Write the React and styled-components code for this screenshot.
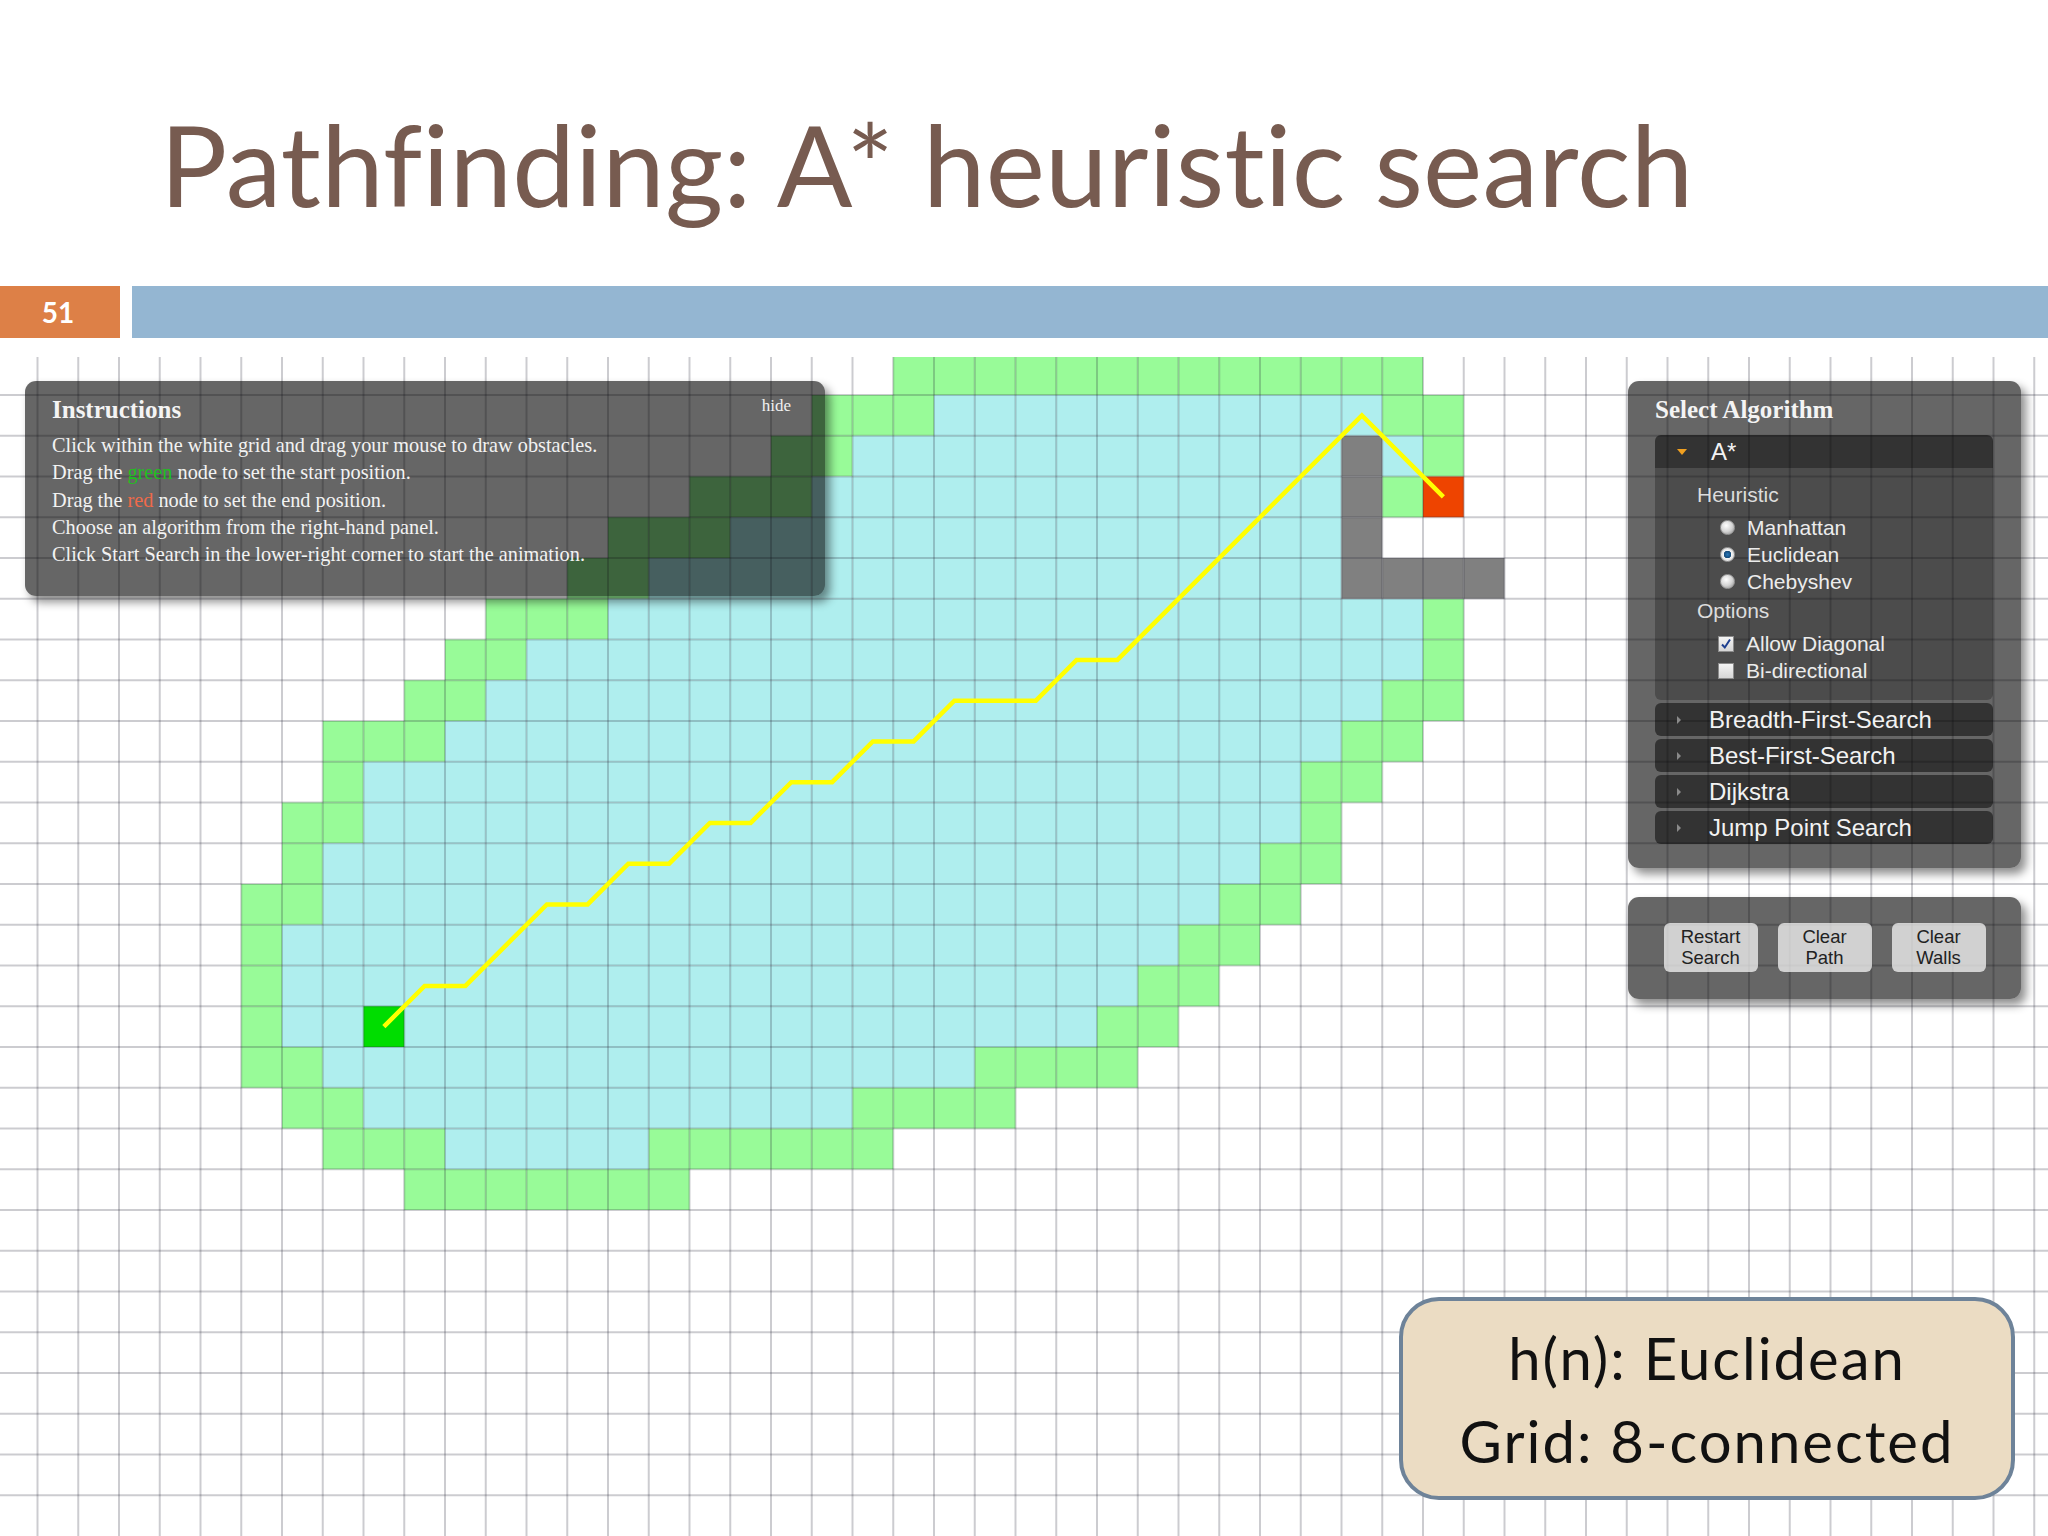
import React from "react";
import styled, { createGlobalStyle } from "styled-components";

const GlobalStyle = createGlobalStyle`
  html, body {
    margin: 0;
    padding: 0;
    background: #ffffff;
  }
  #root {
    width: 2048px;
    height: 1536px;
    overflow: hidden;
  }
`;

const CELL = 40.75;
const OX = 37.5;
const OY = 38;
const COLS = 50;
const ROWS = 28;

// open = light green, closed = pale turquoise
const spans = {
  "-1": [[21, 33, "o"]],
  0: [[19, 21, "o"], [22, 32, "c"], [33, 34, "o"]],
  1: [[18, 19, "o"], [20, 31, "c"], [33, 33, "c"], [34, 34, "o"]],
  2: [[16, 18, "o"], [19, 31, "c"], [33, 33, "o"]],
  3: [[14, 16, "o"], [17, 31, "c"]],
  4: [[13, 14, "o"], [15, 31, "c"]],
  5: [[11, 13, "o"], [14, 33, "c"], [34, 34, "o"]],
  6: [[10, 11, "o"], [12, 33, "c"], [34, 34, "o"]],
  7: [[9, 10, "o"], [11, 32, "c"], [33, 34, "o"]],
  8: [[7, 9, "o"], [10, 31, "c"], [32, 33, "o"]],
  9: [[7, 7, "o"], [8, 30, "c"], [31, 32, "o"]],
  10: [[6, 7, "o"], [8, 30, "c"], [31, 31, "o"]],
  11: [[6, 6, "o"], [7, 29, "c"], [30, 31, "o"]],
  12: [[5, 6, "o"], [7, 28, "c"], [29, 30, "o"]],
  13: [[5, 5, "o"], [6, 27, "c"], [28, 29, "o"]],
  14: [[5, 5, "o"], [6, 26, "c"], [27, 28, "o"]],
  15: [[5, 5, "o"], [6, 25, "c"], [26, 27, "o"]],
  16: [[5, 6, "o"], [7, 22, "c"], [23, 26, "o"]],
  17: [[6, 7, "o"], [8, 19, "c"], [20, 23, "o"]],
  18: [[7, 9, "o"], [10, 14, "c"], [15, 20, "o"]],
  19: [[9, 15, "o"]],
};

const walls = [
  [32, 1], [32, 2], [32, 3], [32, 4], [33, 4], [34, 4], [35, 4],
];

const start = [8, 15];
const end = [34, 2];

const path = [
  [8, 15], [9, 14], [10, 14], [12, 12], [13, 12], [14, 11], [15, 11],
  [16, 10], [17, 10], [18, 9], [19, 9], [20, 8], [21, 8], [22, 7],
  [24, 7], [25, 6], [26, 6], [32, 0], [34, 2],
];

const fills = { o: "#98fb98", c: "#afeeee" };

const BoardSvg = styled.svg`
  display: block;
  position: absolute;
  inset: 0;
`;

function GridBoard() {
  const cells = [];
  Object.entries(spans).forEach(([row, list]) => {
    const j = Number(row);
    list.forEach(([a, b, t]) => {
      for (let k = a; k <= b; k++) {
        cells.push(
          <rect
            key={`${k}-${j}`}
            x={OX + CELL * k}
            y={OY + CELL * j}
            width={CELL}
            height={CELL}
            fill={fills[t]}
          />
        );
      }
    });
  });
  walls.forEach(([k, j]) =>
    cells.push(
      <rect key={`w${k}-${j}`} x={OX + CELL * k} y={OY + CELL * j} width={CELL} height={CELL} fill="#808080" />
    )
  );
  const lines = [];
  for (let k = 0; k < COLS; k++) {
    const x = OX + CELL * k;
    lines.push(<line key={`v${k}`} x1={x} y1={0} x2={x} y2={1179} />);
  }
  for (let j = 0; j < ROWS; j++) {
    const y = OY + CELL * j;
    lines.push(<line key={`h${j}`} x1={0} y1={y} x2={2048} y2={y} />);
  }
  const pts = path
    .map(([k, j]) => `${OX + CELL * (k + 0.5)},${OY + CELL * (j + 0.5)}`)
    .join(" ");
  return (
    <BoardSvg width="2048" height="1179" viewBox="0 0 2048 1179">
      {cells}
      <rect x={OX + CELL * start[0]} y={OY + CELL * start[1]} width={CELL} height={CELL} fill="#00dd00" />
      <rect x={OX + CELL * end[0]} y={OY + CELL * end[1]} width={CELL} height={CELL} fill="#ee4400" />
      <g stroke="rgba(40,40,60,0.24)" strokeWidth="2">{lines}</g>
      <polyline points={pts} fill="none" stroke="#ffff00" strokeWidth="4.5" strokeLinejoin="miter" />
    </BoardSvg>
  );
}

const Slide = styled.div`
  width: 2048px;
  height: 1536px;
  display: flex;
  flex-direction: column;
  background: #ffffff;
`;

const TitleArea = styled.header`
  height: 286px;
  padding: 108px 0 0 160px;
  box-sizing: border-box;
`;

const Title = styled.h1`
  margin: 0;
  font-family: "Lato", "Liberation Sans", sans-serif;
  font-weight: 400;
  font-size: 112px;
  line-height: 1;
  color: #775b50;
  white-space: nowrap;
  font-variant-ligatures: none;
  letter-spacing: 0.2px;
`;

const Bar = styled.div`
  height: 52px;
  display: flex;
  gap: 12px;
`;

const SlideNum = styled.div`
  width: 120px;
  background: #dd8047;
  color: #ffffff;
  font-family: "Lato", "Liberation Sans", sans-serif;
  font-weight: 700;
  font-size: 28px;
  display: flex;
  align-items: center;
  justify-content: center;
  padding-right: 4px;
  box-sizing: border-box;
`;

const BarFill = styled.div`
  flex: 1;
  background: #94b6d2;
`;

const Board = styled.main`
  flex: 1;
  margin-top: 19px;
  position: relative;
  overflow: hidden;
`;

const DarkPanel = styled.section`
  background: rgba(0, 0, 0, 0.6);
  border-radius: 11px;
  box-shadow: 5px 6px 10px rgba(0, 0, 0, 0.45);
  box-sizing: border-box;
  color: #f2f2f2;
`;

const Instructions = styled(DarkPanel)`
  position: absolute;
  left: 25px;
  top: 24px;
  width: 800px;
  height: 215px;
  padding: 14px 34px 0 27px;
  font-family: "Liberation Serif", "Times New Roman", serif;
`;

const PanelHead = styled.div`
  display: flex;
  justify-content: space-between;
  align-items: flex-start;
`;

const PanelTitle = styled.h2`
  margin: 0;
  font-family: "Liberation Serif", "Times New Roman", serif;
  font-weight: 700;
  font-size: 25px;
  line-height: 30px;
  color: #f4f4f4;
`;

const HideLink = styled.span`
  font-size: 17px;
  line-height: 22px;
  color: #f0f0f0;
`;

const InstructionList = styled.div`
  margin-top: 7px;
  font-size: 20.3px;
  line-height: 27.3px;
`;

const Colored = styled.span`
  color: ${(p) => p.$c};
`;

const RightColumn = styled.div`
  position: absolute;
  left: 1628px;
  top: 24px;
  width: 393px;
  display: flex;
  flex-direction: column;
  gap: 29px;
`;

const AlgoPanel = styled(DarkPanel)`
  padding: 14px 28px 24px 27px;
  font-family: "Liberation Sans", Arial, sans-serif;
`;

const Accordion = styled.div`
  margin-top: 10px;
  display: flex;
  flex-direction: column;
`;

const AccHeader = styled.div`
  height: 33px;
  margin-top: ${(p) => (p.$first ? 0 : 3)}px;
  background: rgba(0, 0, 0, 0.5);
  border-radius: ${(p) => (p.$open ? "6px 6px 0 0" : "6px")};
  display: flex;
  align-items: center;
  font-size: 24px;
  color: #f2f2f2;
`;

const Caret = styled.span`
  width: 0;
  height: 0;
  margin: 0 24px 0 22px;
  ${(p) =>
    p.$open
      ? `border-left: 5px solid transparent; border-right: 5px solid transparent; border-top: 6px solid #f0a020;`
      : `border-top: 4px solid transparent; border-bottom: 4px solid transparent; border-left: 4px solid #8a8a8a; margin-right: 28px;`}
`;

const AccBody = styled.div`
  background: rgba(0, 0, 0, 0.25);
  border-radius: 0 0 6px 6px;
  padding: 14px 0 16px 42px;
  color: #e4e4e4;
  font-size: 21px;
`;

const GroupLabel = styled.div`
  height: 26px;
  line-height: 26px;
  margin-top: ${(p) => p.$mt || 0}px;
  color: #dcdcdc;
`;

const OptionList = styled.div`
  margin-top: 6px;
  padding-left: 21px;
`;

const OptionRow = styled.div`
  height: 27px;
  display: flex;
  align-items: center;
  gap: 12px;
  color: #ececec;
`;

const Radio = styled.span`
  width: 15px;
  height: 15px;
  border-radius: 50%;
  box-sizing: border-box;
  border: 1px solid #9a9a9a;
  margin-left: 2px;
  background: ${(p) =>
    p.$checked
      ? "radial-gradient(circle at 50% 50%, #2b78b8 0, #154a7a 3.5px, #f4f4f4 4px, #d8d8d8 7px)"
      : "radial-gradient(circle at 40% 35%, #ffffff 0, #d4d4d4 6px, #b8b8b8 8px)"};
`;

const Check = styled.span`
  width: 16px;
  height: 16px;
  box-sizing: border-box;
  border: 1px solid #8c8c8c;
  background: linear-gradient(#f4f4f4, #d6d6d6);
  display: flex;
  align-items: center;
  justify-content: center;
`;

const ButtonPanel = styled(DarkPanel)`
  height: 102px;
  display: flex;
  align-items: center;
  justify-content: center;
  gap: 20px;
  padding-bottom: 2px;
`;

const ActionButton = styled.button`
  width: 94px;
  height: 49px;
  border: none;
  border-radius: 6px;
  background: rgba(255, 255, 255, 0.7);
  font-family: "Liberation Sans", Arial, sans-serif;
  font-size: 18.5px;
  line-height: 21px;
  color: #222222;
  padding: 0;
  text-align: center;
`;

const Callout = styled.div`
  position: absolute;
  left: 1399px;
  top: 940px;
  width: 616px;
  height: 203px;
  box-sizing: border-box;
  border: 4px solid #6e8399;
  border-radius: 40px;
  background: #ebdcc3;
  display: flex;
  flex-direction: column;
  align-items: center;
  justify-content: center;
  font-family: "Lato", "Liberation Sans", sans-serif;
  font-size: 58px;
  letter-spacing: 2px;
  line-height: 83px;
  color: #111111;
`;

const heuristics = [
  { name: "Manhattan", checked: false },
  { name: "Euclidean", checked: true },
  { name: "Chebyshev", checked: false },
];

const options = [
  { name: "Allow Diagonal", checked: true },
  { name: "Bi-directional", checked: false },
];

const otherAlgos = ["Breadth-First-Search", "Best-First-Search", "Dijkstra", "Jump Point Search"];

export default function App() {
  return (
    <>
      <GlobalStyle />
      <Slide>
        <TitleArea>
          <Title>Pathfinding: A* heuristic search</Title>
        </TitleArea>
        <Bar>
          <SlideNum>51</SlideNum>
          <BarFill />
        </Bar>
        <Board>
          <GridBoard />

          <Instructions>
            <PanelHead>
              <PanelTitle>Instructions</PanelTitle>
              <HideLink>hide</HideLink>
            </PanelHead>
            <InstructionList>
              <div>Click within the white grid and drag your mouse to draw obstacles.</div>
              <div>
                Drag the <Colored $c="#1fbf1f">green</Colored> node to set the start position.
              </div>
              <div>
                Drag the <Colored $c="#ef6a4a">red</Colored> node to set the end position.
              </div>
              <div>Choose an algorithm from the right-hand panel.</div>
              <div>Click Start Search in the lower-right corner to start the animation.</div>
            </InstructionList>
          </Instructions>

          <RightColumn>
            <AlgoPanel>
              <PanelTitle>Select Algorithm</PanelTitle>
              <Accordion>
                <AccHeader $first $open>
                  <Caret $open />
                  A*
                </AccHeader>
                <AccBody>
                  <GroupLabel>Heuristic</GroupLabel>
                  <OptionList>
                    {heuristics.map((h) => (
                      <OptionRow key={h.name}>
                        <Radio $checked={h.checked} />
                        {h.name}
                      </OptionRow>
                    ))}
                  </OptionList>
                  <GroupLabel $mt={3}>Options</GroupLabel>
                  <OptionList>
                    {options.map((o) => (
                      <OptionRow key={o.name}>
                        <Check>
                          {o.checked && (
                            <svg width="12" height="12" viewBox="0 0 12 12">
                              <path d="M2 6.5 L4.8 9.5 L10 1.5" fill="none" stroke="#1d3f8f" strokeWidth="2" />
                            </svg>
                          )}
                        </Check>
                        {o.name}
                      </OptionRow>
                    ))}
                  </OptionList>
                </AccBody>
                {otherAlgos.map((a) => (
                  <AccHeader key={a}>
                    <Caret />
                    {a}
                  </AccHeader>
                ))}
              </Accordion>
            </AlgoPanel>

            <ButtonPanel>
              <ActionButton>Restart<br />Search</ActionButton>
              <ActionButton>Clear<br />Path</ActionButton>
              <ActionButton>Clear<br />Walls</ActionButton>
            </ButtonPanel>
          </RightColumn>

          <Callout>
            <div>h(n): Euclidean</div>
            <div>Grid: 8-connected</div>
          </Callout>
        </Board>
      </Slide>
    </>
  );
}
